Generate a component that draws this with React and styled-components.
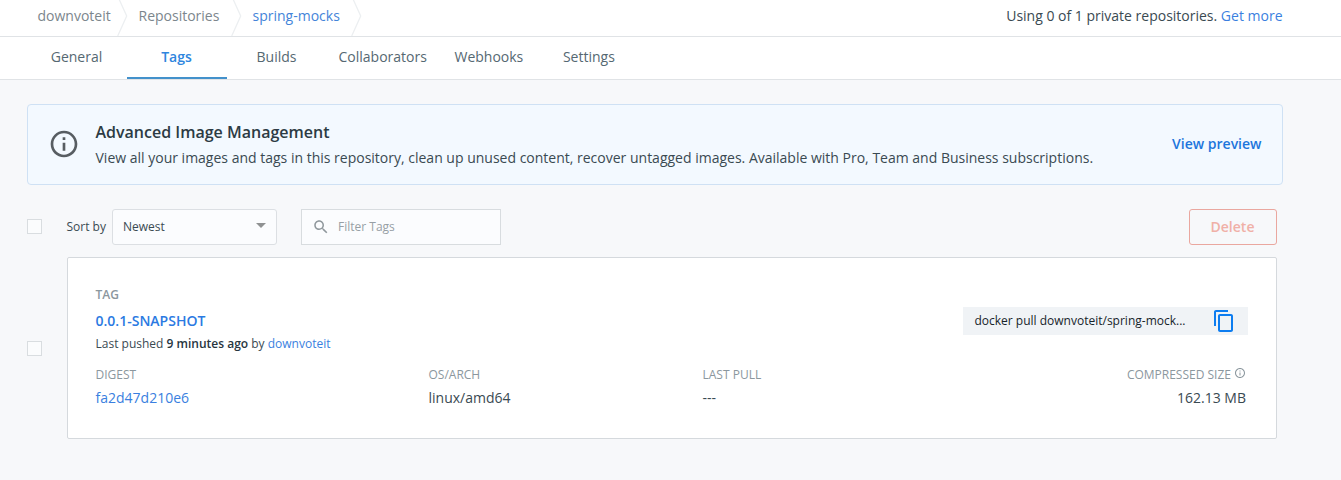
import React from "react";
import styled, { createGlobalStyle } from "styled-components";

const GlobalStyle = createGlobalStyle`
  *, *::before, *::after { box-sizing: border-box; }
  html, body { margin: 0; background: #f7f8fa; }
  body {
    font-family: "Open Sans", "Liberation Sans", sans-serif;
    font-size: 14px;
    line-height: 20px;
    color: #3a4a52;
    overflow: hidden;
  }
`;

const Page = styled.div`
  width: 1341px;
  height: 480px;
  background: #f7f8fa;
`;

const TopBar = styled.header`
  height: 37px;
  display: flex;
  justify-content: space-between;
  background: #fff;
  border-bottom: 1px solid #e0e3e6;
  padding: 0 58.5px 0 37.5px;
`;

const Breadcrumb = styled.nav`
  display: flex;
  height: 36px;
`;

const Crumb = styled.a`
  padding-top: 6px;
  width: ${(p) => p.$width}px;
  color: ${(p) => (p.$active ? "#4484d9" : "#7c868d")};
  white-space: nowrap;
`;

const ChevronSvg = styled.svg`
  display: block;
  width: 12px;
  height: 36px;
  margin-right: ${(p) => p.$gap}px;
`;

const Chevron = ({ gap = 0 }) => (
  <ChevronSvg $gap={gap} viewBox="0 0 12 36" fill="none" stroke="#eceff1" strokeWidth="1.3">
    <path d="M2 -1 L9.7 16 L0.7 36" />
  </ChevronSvg>
);

const Usage = styled.div`
  padding-top: 6px;
  white-space: nowrap;
`;

const Link = styled.a`
  color: #3a7fe0;
`;

const TabBar = styled.nav`
  height: 43px;
  display: flex;
  background: #fff;
  border-bottom: 1px solid #e0e3e6;
  padding-left: 27px;
`;

const Tab = styled.a`
  min-width: 100px;
  height: 42px;
  padding: 10px 12.5px 0 11.5px;
  text-align: center;
  color: ${(p) => (p.$active ? "#2f86de" : "#556872")};
  font-weight: ${(p) => (p.$active ? 600 : 400)};
  border-bottom: 2px solid ${(p) => (p.$active ? "#4391cb" : "transparent")};
`;

const Content = styled.main`
  padding: 24px 58px 0 27px;
`;

const Banner = styled.section`
  height: 81px;
  display: flex;
  align-items: center;
  padding: 0 20.5px 2px 20px;
  background: #f3f9ff;
  border: 1px solid #cfe1f4;
  border-radius: 4px;
`;

const BannerText = styled.div`
  flex: 1;
  margin-left: 15.5px;
  padding-top: 2px;
`;

const BannerTitle = styled.h2`
  margin: 0;
  font-size: 16px;
  line-height: 26px;
  font-weight: 600;
  color: #2c3b44;
`;

const BannerBody = styled.p`
  margin: 0;
  line-height: 26px;
  white-space: nowrap;
`;

const PreviewLink = styled.a`
  font-weight: 600;
  color: #1d76dc;
`;

const Toolbar = styled.div`
  display: flex;
  align-items: center;
  height: 36px;
  margin: 24px 6px 0 0;
  font-size: 12px;
`;

const Checkbox = styled.span`
  flex: none;
  width: 15px;
  height: 15px;
  margin-right: 25px;
  margin-bottom: ${(p) => p.$lift || 0}px;
  border: 1px solid #d9dde0;
  background: #fbfcfd;
`;

const SortLabel = styled.label`
  width: 45px;
  text-indent: -0.5px;
  white-space: nowrap;
`;

const Select = styled.div`
  display: flex;
  align-items: center;
  justify-content: space-between;
  width: 165px;
  height: 36px;
  padding: 0 10px;
  border: 1px solid #dcdfe3;
  border-radius: 3px;
  background: #fbfcfe;
`;

const Caret = styled.span`
  border: 5px solid transparent;
  border-top-color: #8f9192;
  border-bottom: 0;
  margin-bottom: 3px;
`;

const Filter = styled.div`
  display: flex;
  align-items: center;
  width: 200px;
  height: 36px;
  margin-left: 24px;
  padding-left: 10px;
  gap: 8px;
  border: 1px solid #d8dcdf;
  background: #fbfcfe;
  color: #979fa5;
`;

const DeleteButton = styled.button`
  width: 88px;
  height: 36px;
  margin-left: auto;
  padding: 0 1px 0 0;
  font: 600 14px/20px "Open Sans", sans-serif;
  color: #f0b0a7;
  background: transparent;
  border: 1px solid #eaa79f;
  border-radius: 3px;
`;

const TagRow = styled.div`
  display: flex;
  align-items: center;
  margin: 12px 6px 0 0;
`;

const Card = styled.article`
  flex: 1;
  height: 182px;
  padding: 26px 28px 0 27.5px;
  background: #fff;
  border: 1px solid #d5d9dd;
  border-radius: 2px;
`;

const CardTop = styled.div`
  display: flex;
  justify-content: space-between;
  height: 80px;
`;

const Label = styled.div`
  display: flex;
  align-items: center;
  justify-content: ${(p) => (p.$end ? "flex-end" : "flex-start")};
  gap: 3px;
  height: 22px;
  font-size: 12px;
  line-height: 22px;
  font-weight: ${(p) => (p.$strong ? 600 : 400)};
  color: #8b979e;
  white-space: nowrap;

  svg { margin-bottom: 4px; }
`;

const TagName = styled.a`
  display: block;
  height: 26px;
  line-height: 30px;
  font-weight: 600;
  color: #2b7ae2;
`;

const Pushed = styled.div`
  font-size: 12px;
  line-height: 23px;
  white-space: nowrap;

  b { font-weight: 600; color: #27363f; }
`;

const PullCommand = styled.div`
  display: flex;
  align-items: center;
  justify-content: space-between;
  width: 285px;
  height: 28px;
  margin-top: 23px;
  padding: 0 12px 0 11.5px;
  background: #f0f3f6;
  font-size: 12px;
  color: #17242b;
`;

const Details = styled.div`
  display: grid;
  grid-template-columns: 333px 274px 1fr 200px;
  margin-right: 2px;
`;

const Detail = styled.div`
  text-align: ${(p) => (p.$end ? "right" : "left")};
`;

const Value = styled.div`
  line-height: 23px;
  color: ${(p) => (p.$link ? "#3a7fe0" : "#3a4a52")};
`;

const InfoIcon = ({ size, color }) => (
  <svg width={size} height={size} viewBox="0 0 24 24" fill={color}>
    <path d="M11 7h2v2h-2zm0 4h2v6h-2zm1-9C6.48 2 2 6.48 2 12s4.48 10 10 10 10-4.48 10-10S17.52 2 12 2zm0 18c-4.41 0-8-3.59-8-8s3.59-8 8-8 8 3.59 8 8-3.59 8-8 8z" />
  </svg>
);

const SearchIcon = () => (
  <svg width="18" height="18" viewBox="0 0 24 24" fill="#8f979c">
    <path d="M15.5 14h-.79l-.28-.27C15.41 12.59 16 11.11 16 9.5 16 5.91 13.09 3 9.5 3S3 5.91 3 9.5 5.91 16 9.5 16c1.61 0 3.09-.59 4.23-1.57l.27.28v.79l5 4.99L20.49 19l-4.99-5zm-6 0C7.01 14 5 11.99 5 9.5S7.01 5 9.5 5 14 7.01 14 9.5 11.99 14 9.5 14z" />
  </svg>
);

const CopyIcon = () => (
  <svg width="24" height="24" viewBox="0 0 24 24" fill="#0d7df0">
    <path d="M16 1H4c-1.1 0-2 .9-2 2v14h2V3h12V1zm3 4H8c-1.1 0-2 .9-2 2v14c0 1.1.9 2 2 2h11c1.1 0 2-.9 2-2V7c0-1.1-.9-2-2-2zm0 16H8V7h11v14z" />
  </svg>
);

export default function App() {
  return (
    <Page>
      <GlobalStyle />
      <TopBar>
        <Breadcrumb>
          <Crumb $width={79}>downvoteit</Crumb>
          <Chevron gap={10} />
          <Crumb $width={92}>Repositories</Crumb>
          <Chevron gap={10} />
          <Crumb $width={98} $active>spring-mocks</Crumb>
          <Chevron />
        </Breadcrumb>
        <Usage>
          Using 0 of 1 private repositories. <Link>Get more</Link>
        </Usage>
      </TopBar>
      <TabBar>
        <Tab>General</Tab>
        <Tab $active>Tags</Tab>
        <Tab>Builds</Tab>
        <Tab>Collaborators</Tab>
        <Tab>Webhooks</Tab>
        <Tab>Settings</Tab>
      </TabBar>
      <Content>
        <Banner>
          <InfoIcon size={32} color="#575d62" />
          <BannerText>
            <BannerTitle>Advanced Image Management</BannerTitle>
            <BannerBody>
              View all your images and tags in this repository, clean up unused content, recover untagged images. Available with Pro, Team and Business subscriptions.
            </BannerBody>
          </BannerText>
          <PreviewLink>View preview</PreviewLink>
        </Banner>
        <Toolbar>
          <Checkbox $lift={1} />
          <SortLabel>Sort by</SortLabel>
          <Select>
            Newest
            <Caret />
          </Select>
          <Filter>
            <SearchIcon />
            Filter Tags
          </Filter>
          <DeleteButton>Delete</DeleteButton>
        </Toolbar>
        <TagRow>
          <Checkbox />
          <Card>
            <CardTop>
              <div>
                <Label $strong>TAG</Label>
                <TagName>0.0.1-SNAPSHOT</TagName>
                <Pushed>
                  Last pushed <b>9 minutes ago</b> by <Link>downvoteit</Link>
                </Pushed>
              </div>
              <PullCommand>
                docker pull downvoteit/spring-mock...
                <CopyIcon />
              </PullCommand>
            </CardTop>
            <Details>
              <Detail>
                <Label>DIGEST</Label>
                <Value $link>fa2d47d210e6</Value>
              </Detail>
              <Detail>
                <Label>OS/ARCH</Label>
                <Value>linux/amd64</Value>
              </Detail>
              <Detail>
                <Label>LAST PULL</Label>
                <Value>---</Value>
              </Detail>
              <Detail $end>
                <Label $end>
                  COMPRESSED SIZE
                  <InfoIcon size={12} color="#8b979e" />
                </Label>
                <Value>162.13 MB</Value>
              </Detail>
            </Details>
          </Card>
        </TagRow>
      </Content>
    </Page>
  );
}
